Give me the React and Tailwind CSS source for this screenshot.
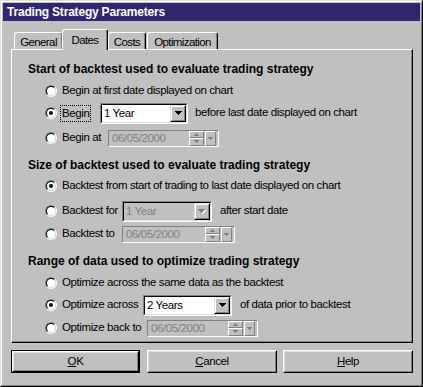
import React from "react";

function Arrow({ disabled }) {
  if (disabled) {
    return (
      <svg width="8" height="5" shapeRendering="crispEdges">
        <path d="M1 1h7v1H1zM2 2h5v1H2zM3 3h3v1H3zM4 4h1v1H4z" fill="#ffffff" />
        <path d="M0 0h7v1H0zM1 1h5v1H1zM2 2h3v1H2zM3 3h1v1H3z" fill="#808080" />
      </svg>
    );
  }
  return (
    <svg width="7" height="4" shapeRendering="crispEdges">
      <path d="M0 0h7v1H0zM1 1h5v1H1zM2 2h3v1H2zM3 3h1v1H3z" fill="#000000" />
    </svg>
  );
}

function SmallArrow({ up }) {
  return (
    <svg width="5" height="3" shapeRendering="crispEdges">
      {up ? (
        <path d="M2 0h1v1H2zM1 1h3v1H1zM0 2h5v1H0z" fill="#808080" />
      ) : (
        <path d="M0 0h5v1H0zM1 1h3v1H1zM2 2h1v1H2z" fill="#808080" />
      )}
    </svg>
  );
}

function Radio({ checked }) {
  return (
    <div className="w-[12px] h-[12px] shrink-0 rounded-full border border-t-[#808080] border-l-[#808080] border-b-white border-r-white">
      <div className="w-full h-full rounded-full border border-t-black border-l-black border-b-[#dfdfdf] border-r-[#dfdfdf] bg-white flex items-center justify-center">
        {checked && <div className="w-[4px] h-[4px] rounded-full bg-black" />}
      </div>
    </div>
  );
}

function DropBtn({ disabled }) {
  return (
    <div className="w-[16px] h-full shrink-0 border border-t-[#dfdfdf] border-l-[#dfdfdf] border-b-black border-r-black">
      <div className="w-full h-full border border-t-white border-l-white border-b-[#808080] border-r-[#808080] bg-[#c0c0c0] flex items-center justify-center">
        <Arrow disabled={disabled} />
      </div>
    </div>
  );
}

function Combo({ className, text, disabled }) {
  return (
    <div className={`${className} h-[21px] shrink-0 flex border border-t-[#808080] border-l-[#808080] border-b-white border-r-white`}>
      <div className={`flex-1 flex border border-t-black border-l-black border-b-[#dfdfdf] border-r-[#dfdfdf] ${disabled ? "bg-[#c0c0c0]" : "bg-white"}`}>
        <span className={`flex-1 pl-[2px] leading-[17px] ${disabled ? "text-[#808080]" : "text-black"}`}>{text}</span>
        <DropBtn disabled={disabled} />
      </div>
    </div>
  );
}

function MiniBtn({ className, children }) {
  return (
    <div className={`${className} border border-t-white border-l-white border-b-[#808080] border-r-[#808080] bg-[#c0c0c0] flex items-center justify-center`}>
      {children}
    </div>
  );
}

function DateField({ className }) {
  return (
    <div className={`${className} h-[17px] shrink-0 flex border border-t-[#808080] border-l-[#808080] border-b-white border-r-white bg-[#c0c0c0]`}>
      <span className="flex-1 pl-[3px] leading-[15px] text-[#808080]">06/05/2000</span>
      <div className="w-[15px] h-full flex flex-col">
        <MiniBtn className="h-[7px] w-full">
          <SmallArrow up />
        </MiniBtn>
        <MiniBtn className="h-[8px] w-full">
          <SmallArrow />
        </MiniBtn>
      </div>
      <MiniBtn className="w-[11px] h-full ml-[1px] mr-[2px]">
        <SmallArrow />
      </MiniBtn>
    </div>
  );
}

function Btn({ className, def, children }) {
  return (
    <div className={`${className} h-[23px] shrink-0 ${def ? "border border-black" : ""}`}>
      <div className="h-full border border-t-white border-l-white border-b-black border-r-black">
        <div className="h-full border border-t-[#dfdfdf] border-l-[#dfdfdf] border-b-[#808080] border-r-[#808080] flex items-center justify-center">
          {children}
        </div>
      </div>
    </div>
  );
}

function Tab({ className, selected, children }) {
  return (
    <div
      className={`${className} ${
        selected ? "relative z-10 h-[21px] pt-[1px]" : "h-[18px] pt-[2px]"
      } bg-[#c0c0c0] flex items-center justify-center rounded-t-[3px] border-t border-l border-t-white border-l-white border-r border-r-black shadow-[inset_-1px_0_0_#808080] text-[11.5px] tracking-[-0.6px]`}
    >
      {children}
    </div>
  );
}

function Heading({ className, children }) {
  return (
    <div className={`${className} h-[18px] flex items-center font-bold text-[12px] tracking-normal`}>
      {children}
    </div>
  );
}

export default function App() {
  return (
    <div className="w-[423px] h-[387px] bg-[#c0c0c0] border border-t-[#dfdfdf] border-l-[#dfdfdf] border-b-black border-r-black font-['Liberation_Sans',Arial,sans-serif] text-[11.5px] tracking-[-0.4px] text-black">
      <div className="w-full h-full border border-t-white border-l-white border-b-[#808080] border-r-[#808080] p-[1px]">
        <div className="h-[18px] bg-[#312770] text-white font-bold text-[12px] tracking-[-0.2px] flex items-center pl-[4px]">
          Trading Strategy Parameters
        </div>

        <div className="flex items-end h-[21px] ml-[8px] mt-[8px]">
          <Tab className="ml-[3px] w-[49px]">General</Tab>
          <Tab className="-ml-[1px] w-[46px]" selected>
            Dates
          </Tab>
          <Tab className="w-[38px]">Costs</Tab>
          <Tab className="ml-[1px] w-[71px]">Optimization</Tab>
        </div>

        <div className="relative ml-[8px] -mt-[1px] w-[402px] h-[294px] border-t border-l border-t-white border-l-white border-r border-b border-r-black border-b-black shadow-[inset_-1px_-1px_0_#808080] pt-[10px] pl-[16px]">
          <Heading>Start of backtest used to evaluate trading strategy</Heading>
          <div className="flex items-center h-[18px] mt-[4px] ml-[17px]">
            <Radio />
            <span className="ml-[5px]">Begin at first date displayed on chart</span>
          </div>
          <div className="flex items-center h-[22px] mt-[2px] ml-[17px]">
            <Radio checked />
            <div className="ml-[3px] w-[40px] shrink-0 flex items-center">
              <span className="border border-dotted border-black pl-[1px] pr-[1px] h-[17px] leading-[15px]">Begin</span>
            </div>
            <Combo className="w-[88px]" text="1 Year" />
            <span className="ml-[7px]">before last date displayed on chart</span>
          </div>
          <div className="flex items-center h-[20px] mt-[4px] ml-[17px]">
            <Radio />
            <span className="ml-[5px] w-[46px] shrink-0">Begin at</span>
            <DateField className="w-[111px]" />
          </div>

          <Heading className="mt-[8px]">Size of backtest used to evaluate trading strategy</Heading>
          <div className="flex items-center h-[18px] mt-[3px] ml-[17px]">
            <Radio checked />
            <span className="ml-[5px]">Backtest from start of trading to last date displayed on chart</span>
          </div>
          <div className="flex items-center h-[22px] mt-[5px] ml-[17px]">
            <Radio />
            <span className="ml-[5px] w-[60px] shrink-0">Backtest for</span>
            <Combo className="w-[90px]" text="1 Year" disabled />
            <span className="ml-[8px]">after start date</span>
          </div>
          <div className="flex items-center h-[20px] mt-[2px] ml-[17px]">
            <Radio />
            <span className="ml-[5px] w-[60px] shrink-0">Backtest to</span>
            <DateField className="w-[113px]" />
          </div>

          <Heading className="mt-[8px]">Range of data used to optimize trading strategy</Heading>
          <div className="flex items-center h-[18px] mt-[4px] ml-[17px]">
            <Radio />
            <span className="ml-[5px]">Optimize across the same data as the backtest</span>
          </div>
          <div className="flex items-center h-[22px] mt-[2px] ml-[17px]">
            <Radio checked />
            <span className="ml-[5px] w-[81px] shrink-0">Optimize across</span>
            <Combo className="w-[89px]" text="2 Years" />
            <span className="ml-[8px]">of data prior to backtest</span>
          </div>
          <div className="flex items-center h-[20px] mt-[2px] ml-[17px]">
            <Radio />
            <span className="ml-[5px] w-[85px] shrink-0">Optimize back to</span>
            <DateField className="w-[111px]" />
          </div>
        </div>

        <div className="flex mt-[7px] ml-[8px]">
          <Btn className="w-[129px]" def>
            <span>
              <span className="underline">O</span>K
            </span>
          </Btn>
          <Btn className="w-[130px] ml-[7px]">
            <span>
              <span className="underline">C</span>ancel
            </span>
          </Btn>
          <Btn className="w-[130px] ml-[6px]">
            <span>
              <span className="underline">H</span>elp
            </span>
          </Btn>
        </div>
      </div>
    </div>
  );
}
